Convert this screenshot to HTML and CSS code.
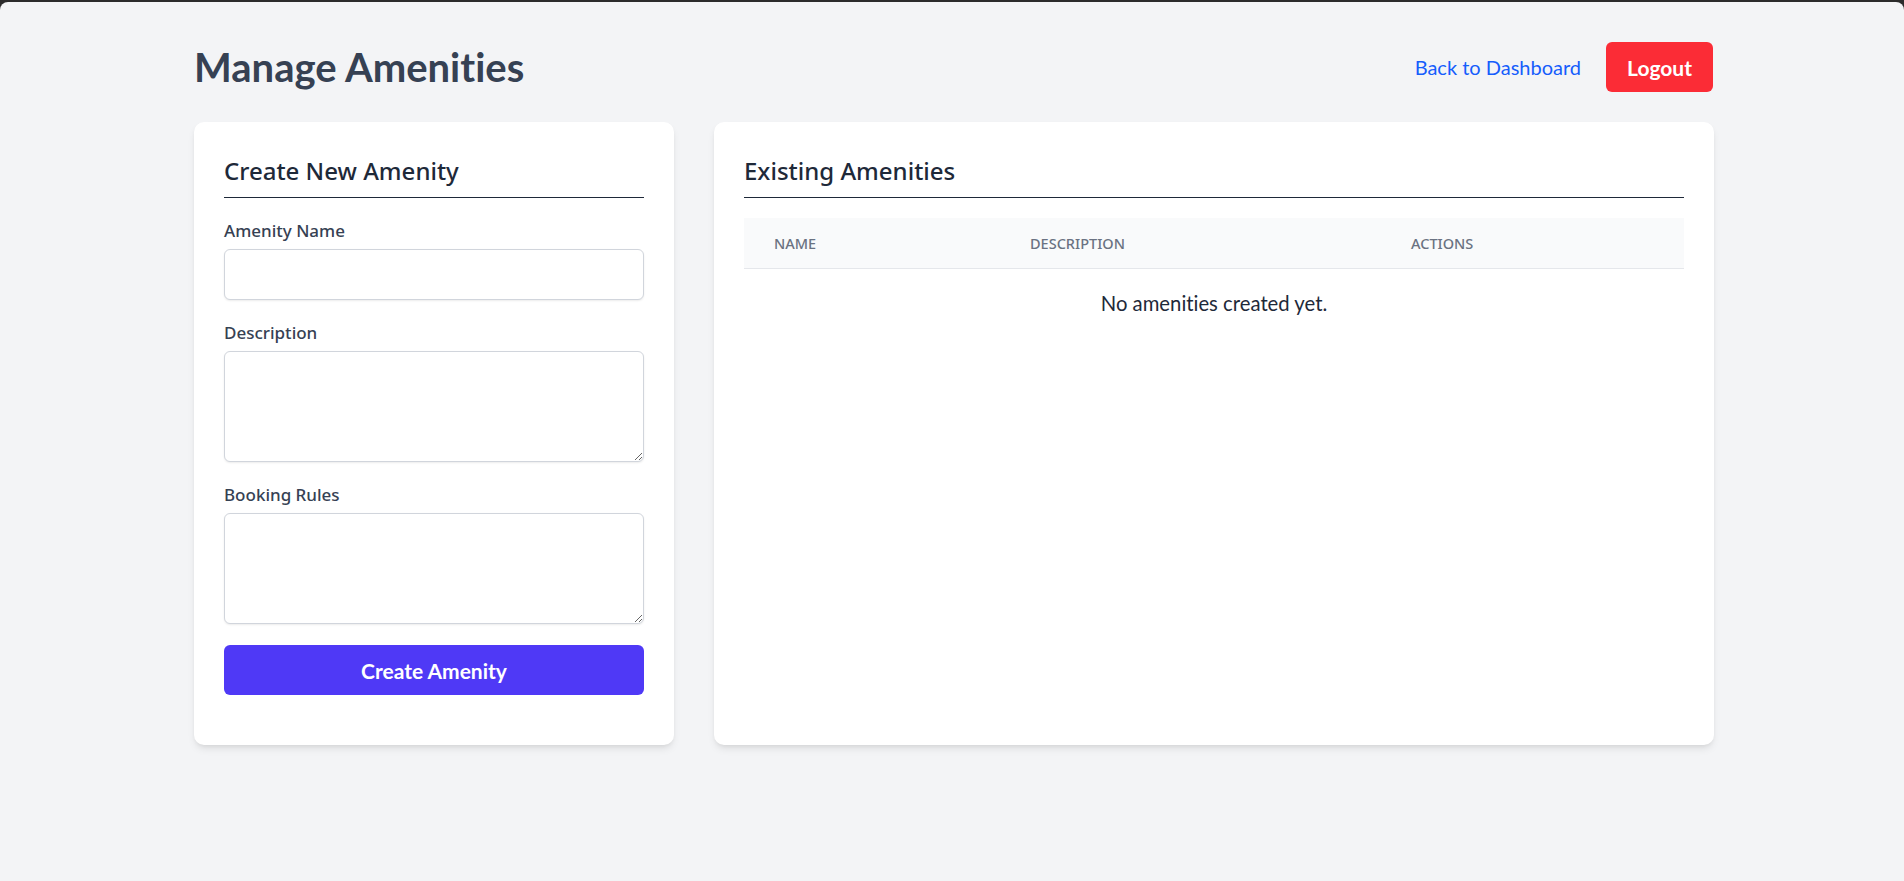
FILE: index.html
```html
<!DOCTYPE html>
<html lang="en">
<head>
<meta charset="utf-8">
<title>Manage Amenities</title>
<link rel="stylesheet" href="styles.css">
</head>
<body>
<div class="window">
  <header class="page-header">
    <h1 class="page-title">Manage Amenities</h1>
    <div class="header-actions">
      <a class="back-link" href="#">Back to Dashboard</a>
      <button class="btn-logout" type="button">Logout</button>
    </div>
  </header>
  <main class="layout">
    <section class="card card-form">
      <h2 class="card-title">Create New Amenity</h2>
      <form class="form">
        <div class="field">
          <label class="label" for="name">Amenity Name</label>
          <input class="input" id="name" type="text">
        </div>
        <div class="field">
          <label class="label" for="desc">Description</label>
          <textarea class="input textarea" id="desc"></textarea>
        </div>
        <div class="field">
          <label class="label" for="rules">Booking Rules</label>
          <textarea class="input textarea" id="rules"></textarea>
        </div>
        <button class="btn-primary" type="button">Create Amenity</button>
      </form>
    </section>
    <section class="card card-list">
      <h2 class="card-title">Existing Amenities</h2>
      <table class="table">
        <thead>
          <tr>
            <th class="col-name">Name</th>
            <th class="col-desc">Description</th>
            <th class="col-actions">Actions</th>
          </tr>
        </thead>
        <tbody>
          <tr>
            <td class="empty" colspan="3">No amenities created yet.</td>
          </tr>
        </tbody>
      </table>
    </section>
  </main>
</div>
</body>
</html>
```

FILE: styles.css
```css
* { box-sizing: border-box; }

html, body {
  margin: 0;
  padding: 0;
  background: #2b2b2b;
}

body {
  font-family: Lato, "Noto Sans", sans-serif;
  font-variant-ligatures: none;
  color: #1e2939;
}

.window {
  margin-top: 2px;
  min-height: 879px;
  background: #f3f4f6;
  border-radius: 8px 8px 0 0;
  padding: 40px 191px 0 194px;
}

.page-header {
  display: flex;
  align-items: center;
  justify-content: space-between;
  height: 50px;
  margin-bottom: 30px;
}

.page-title {
  margin: 0;
  font-size: 40px;
  line-height: 52px;
  font-weight: 700;
  color: #364153;
}

.header-actions {
  display: flex;
  align-items: center;
  gap: 25px;
}

.back-link {
  font-size: 20px;
  line-height: 28px;
  color: #155dfc;
  text-decoration: none;
}

.btn-logout {
  height: 50px;
  padding: 0 21px;
  border: none;
  border-radius: 6px;
  background: #fb2c36;
  color: #fff;
  font-family: inherit;
  font-variant-ligatures: none;
  font-size: 21px;
  font-weight: 700;
}

.layout {
  display: grid;
  grid-template-columns: 480px 1fr;
  gap: 40px;
  align-items: stretch;
}

.card {
  background: #fff;
  border-radius: 10px;
  box-shadow: 0 5px 8px -2px rgba(0,0,0,0.1), 0 2px 5px -2px rgba(0,0,0,0.08);
  padding: 30px;
}

.card-title {
  margin: 0 0 20px;
  font-family: "Noto Sans", sans-serif;
  font-size: 24px;
  line-height: 38px;
  font-weight: 500;
  color: #1e2939;
  padding-bottom: 7px;
  border-bottom: 1px solid #1e2939;
}

.form {
  display: flex;
  flex-direction: column;
  margin-bottom: 20px;
}

.field {
  display: flex;
  flex-direction: column;
  margin-bottom: 20px;
}

.label {
  font-family: "Noto Sans", sans-serif;
  font-size: 17px;
  line-height: 26px;
  font-weight: 500;
  color: #364153;
  margin-bottom: 5px;
}

.input {
  display: block;
  width: 100%;
  height: 51px;
  border: 1px solid #d1d5dc;
  border-radius: 6px;
  box-shadow: 0 1px 2px rgba(0,0,0,0.08);
  background: #fff;
  font-family: inherit;
  font-size: 20px;
  padding: 8px 12px;
}

.textarea {
  height: 111px;
  resize: vertical;
}

.btn-primary {
  height: 50px;
  width: 100%;
  margin-top: 1px;
  border: none;
  border-radius: 6px;
  background: #4f39f6;
  color: #fff;
  font-family: inherit;
  font-variant-ligatures: none;
  font-size: 21px;
  font-weight: 700;
}

.table {
  width: 100%;
  border-collapse: collapse;
  table-layout: fixed;
}

.table thead tr {
  background: #f9fafb;
  border-bottom: 1px solid #e5e7eb;
}

.table th {
  text-align: left;
  padding: 15px 30px;
  font-family: "Noto Sans", sans-serif;
  font-size: 14.5px;
  line-height: 20px;
  font-weight: 500;
  text-transform: uppercase;
  letter-spacing: 0;
  color: #6a7282;
}

.col-name { width: 256px; }
.col-desc { width: 381px; }
.col-actions { width: 303px; }

.empty {
  text-align: center;
  padding: 20px 30px;
  font-size: 20.3px;
  line-height: 28px;
  color: #1e2939;
}
```
